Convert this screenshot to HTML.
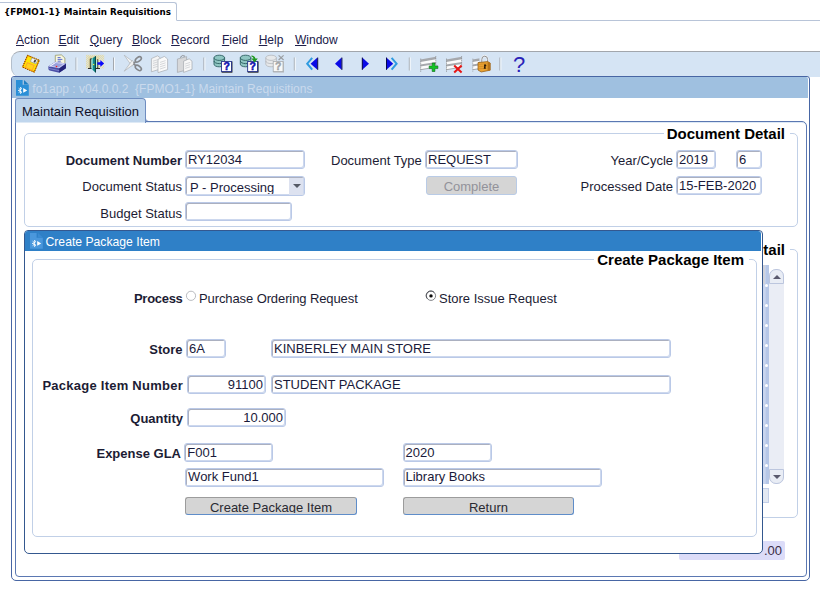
<!DOCTYPE html>
<html><head><meta charset="utf-8"><title>Maintain Requisitions</title>
<style>
html,body{margin:0;padding:0;background:#fff;}
body{width:820px;height:590px;position:relative;overflow:hidden;font-family:"Liberation Sans",Arial,sans-serif;font-size:13px;color:#000;}
.a{position:absolute;box-sizing:border-box;}
.t{position:absolute;white-space:nowrap;line-height:1;box-sizing:border-box;}
.b{font-weight:bold;}
.r{text-align:right;}
.f{position:absolute;box-sizing:border-box;margin-top:-0.5px;background:#fff;border:1px solid #bac9e7;border-radius:3px;box-shadow:inset 1px 1px 0 #abb0c0,inset -1px -1px 0 #cdd8ee;font-size:13px;line-height:17px;padding:0 2px;white-space:nowrap;overflow:hidden;height:19px;}
.btn{position:absolute;box-sizing:border-box;background:#d5d5d5;border:1px solid #9c9c9c;border-right-color:#5f8dc9;border-bottom-color:#5f8dc9;border-radius:3px;font-size:13px;text-align:center;white-space:nowrap;overflow:hidden;height:18px;line-height:20px;color:#2a2a32;}
.frame{position:absolute;box-sizing:border-box;border:1px solid #c1d0e7;border-radius:5px;}
.lb{font-size:13px;color:#1c1c34;}
.ft{font-size:15px;color:#000;}
.f{color:#1a1a3a;}
.bt{height:14.5px;overflow:hidden;line-height:19.6px;}
u{text-decoration:underline;}
</style></head><body>

<!-- top browser tab -->
<div class="a" style="left:0;top:20px;width:820px;height:1px;background:#b8c4d8;"></div>
<div class="a" style="left:-1px;top:2px;width:178px;height:19px;border:1px solid #b8c4d8;border-bottom:1px solid #fff;border-radius:0 3px 0 0;background:#fff;"></div>
<div class="t b" style="left:4px;top:7.8px;font-family:'DejaVu Sans',Verdana,sans-serif;font-size:8.75px;">{FPMO1-1} Maintain Requisitions</div>

<!-- menu -->
<div id="menu" style="font-size:12px;color:#20204a;"><span class="t" style="left:16px;top:33.6px;"><u>A</u>ction</span><span class="t" style="left:58.5px;top:33.6px;"><u>E</u>dit</span><span class="t" style="left:89.8px;top:33.6px;"><u>Q</u>uery</span><span class="t" style="left:131.9px;top:33.6px;"><u>B</u>lock</span><span class="t" style="left:171.1px;top:33.6px;"><u>R</u>ecord</span><span class="t" style="left:221.9px;top:33.6px;"><u>F</u>ield</span><span class="t" style="left:258.7px;top:33.6px;"><u>H</u>elp</span><span class="t" style="left:295px;top:33.6px;"><u>W</u>indow</span></div>

<!-- toolbar -->
<div class="a" style="left:11px;top:50.6px;width:820px;height:26.4px;background:#d5e4f4;border:1px solid #b4bfcc;border-top-color:#a2a6ac;border-bottom:none;border-radius:9px 0 0 9px;"></div>

<!-- toolbar icons -->
<svg class="a" style="left:0;top:50px;" width="540" height="28" viewBox="0 50 540 28">
<defs>
 <pattern id="stip" x="86" y="54.8" width="2" height="2" patternUnits="userSpaceOnUse"><rect width="2" height="2" fill="#d9e4ec"/><rect width="1" height="1" fill="#e6d99a"/><rect x="1" y="1" width="1" height="1" fill="#e6d99a"/></pattern>
 <g id="sep"><rect x="0" y="57.5" width="1" height="13" fill="#a4a8ae"/><rect x="1" y="57.5" width="1" height="13" fill="#f4f8fc"/></g>
 <g id="cyl"><path d="M0 2.6 V9 A5.3 2.6 0 0 0 10.6 9 V2.6 Z"/><ellipse cx="5.3" cy="2.6" rx="5.3" ry="2.6"/><path d="M0 5.8 A5.3 2.6 0 0 0 10.6 5.8" fill="none"/></g>
 <g id="qbox"><rect x="0.5" y="0.5" width="10" height="10.6"/></g>
 <g id="rows"><path d="M0 3.5 L15.6 .8 V11.5 L0 14.2 Z" fill="#a6a8ac"/><path d="M0 6 L15.6 3.3 V5.9 L0 8.6 Z" fill="#fbfbfb"/><path d="M0 10.6 L15.6 7.9 V10.5 L0 13.2 Z" fill="#fbfbfb"/><path d="M.3 2.5 V16.2 M15.4 0 V11.5" stroke="#8a8c90" stroke-width=".7" stroke-dasharray="1.4 .6" fill="none"/></g>
</defs>
<!-- save -->
<g transform="translate(30.9 63.7) rotate(23) scale(.93)"><rect x="-6.7" y="-6.7" width="13.4" height="13.4" fill="#ffe600" stroke="#ff9c00" stroke-width="1.3"/><rect x="-6.9" y="-6.9" width="13.8" height="13.8" fill="none" stroke="#2e2000" stroke-width=".9" stroke-dasharray="1 1.5"/><rect x="-1.4" y="-6.3" width="6.6" height="4.4" fill="#f2f2f2" stroke="#8a8a8a" stroke-width=".6"/><rect x="1.9" y="-5.5" width="1.9" height="2.8" fill="#3c3c3c"/><rect x="-4" y=".4" width="8" height="5.6" fill="#ffd21e" stroke="#ffa62a" stroke-width="1"/></g>
<!-- printer -->
<g><path d="M55.3 62.8 L55.3 55.3 L61.4 54.9 L64.9 58 L64.9 64.2 Z" fill="#f7f7df" stroke="#8c8c58" stroke-width=".7"/><path d="M57.6 57.6h3M57.6 59.4h4.8M57.6 61.2h3.2" stroke="#4a5ad0" stroke-width=".9"/><path d="M48.4 66.2 L55.4 61.7 L65.9 63.5 L65.9 68.2 L59.2 72.7 L49.6 70.5 Q48.3 70 48.4 68.6 Z" fill="#4a4ea6"/><path d="M59.2 68.3 L65.9 63.5 V68.2 L59.2 72.7 Z" fill="#24247a"/><path d="M48.4 66.2 L55.4 61.7 L65.9 63.5 L59.2 68.3 Z" fill="#c8ccf2"/><path d="M51.4 65.8 L55.8 63 L63 64.3 L58.8 67.2 Z" fill="#9aa0dc"/><path d="M49.6 66.4 L55.4 62.6" stroke="#fff" stroke-width=".8"/><path d="M48.6 68.4 L59.2 70.6" stroke="#7c82cc" stroke-width="1"/><rect x="55.8" y="65.9" width="1.4" height="1.3" fill="#ff1a1a"/></g>
<use href="#sep" x="75.5"/>
<!-- exit -->
<g><rect x="86" y="54.8" width="18.2" height="13.6" fill="url(#stip)"/><rect x="88.4" y="56.4" width="10.6" height="12" fill="#e2d9a8"/><path d="M90.3 68.5 V58.9 H92 M97.7 59.3 V68.5 M88 68.5 H100" fill="none" stroke="#1a1a1a" stroke-width=".9"/><path d="M100 59.4 L104.6 63.5 L100 67.6 Z" fill="#fff"/><path d="M91.6 58.7 L95.8 55.9 V72.8 L91.6 69.1 Z" fill="#128a8a"/><path d="M91.6 58.7 L92.8 57.9 V70.1 L91.6 69.1 Z" fill="#8adcdc"/><path d="M94.9 56.5 L95.9 55.9 V72.8 L94.9 72 Z" fill="#063c3c"/><rect x="96.1" y="60" width="1.1" height="7.2" fill="#a8f2f2"/><rect x="93" y="63.9" width="1.2" height="1.2" fill="#ffe83a"/><path d="M97.4 62.3 H100.3 V59.9 L104.2 63.5 L100.3 67 V64.8 H97.4 Z" fill="#0808fa"/></g>
<use href="#sep" x="113"/>
<!-- scissors -->
<g><path d="M124.2 55.2 L135 63.2 L132 66.2 Z" fill="#f8f8f8" stroke="#aeb1b6" stroke-width=".7"/><path d="M124.2 71.2 L135 63.4 L132.2 60.4 Z" fill="#f0f0f0" stroke="#aeb1b6" stroke-width=".7"/><ellipse cx="138.3" cy="59.4" rx="3.5" ry="2" transform="rotate(-38 138.3 59.4)" fill="none" stroke="#85878b" stroke-width="1.6"/><ellipse cx="138.3" cy="67.9" rx="3.5" ry="2" transform="rotate(38 138.3 67.9)" fill="none" stroke="#85878b" stroke-width="1.6"/><path d="M133.4 63.4 L135.8 61.6 M133.4 63.6 L135.8 65.6" stroke="#85878b" stroke-width="1.6"/></g>
<!-- copy -->
<g stroke="#a8acb2" stroke-width=".7"><path d="M151.4 58.6 L157.6 55.8 L160.4 58 V69 L151.4 71.8 Z" fill="#f4f4f4"/><path d="M158 59.4 L164.4 56.4 L167.6 59 V69.6 L158 72.6 Z" fill="#fafafa"/><path d="M153 61.2l5-1.6M153 63.4l5-1.6M153 65.6l5-1.6M153 67.8l5-1.6M160 62.4l5.6-1.8M160 64.6l5.6-1.8M160 66.8l5.6-1.8M160 69l5.6-1.8" stroke="#c4c7cc" fill="none"/></g>
<!-- paste -->
<g stroke="#a2a6ac" stroke-width=".7"><path d="M177.4 59 L186.6 56.6 V70 L177.4 72.4 Z" fill="#d7d8da"/><path d="M180 57.6 q2.2-3.4 5-1.4" fill="none" stroke="#8e9094" stroke-width="1"/><path d="M183.6 61.2 L189.2 58.8 L192 61.2 V69.4 L183.6 72.4 Z" fill="#f8f8f8"/><path d="M185.2 64l5-1.6M185.2 66.2l5-1.6M185.2 68.4l5-1.6" stroke="#c4c7cc" fill="none"/></g>
<use href="#sep" x="203.4"/>
<!-- enter query -->
<g><use href="#cyl" x="214" y="55.2" fill="#8fc6c2" stroke="#2a5e60" stroke-width=".9"/><rect x="221.6" y="61.4" width="10.8" height="11.2" fill="#0a0a0a"/><rect x="221.6" y="61.4" width="9.8" height="10.2" fill="#fff" stroke="#1c2a8c" stroke-width=".8"/><text x="226.6" y="70.4" font-family="Liberation Sans,Arial,sans-serif" font-weight="bold" font-size="10.5" fill="#1010b0" stroke="#1010b0" stroke-width=".5" text-anchor="middle">?</text></g>
<!-- execute query -->
<g><use href="#cyl" x="240.3" y="55.2" fill="#8fc6c2" stroke="#2a5e60" stroke-width=".9"/><rect x="247.7" y="61.4" width="10.8" height="11.2" fill="#0a0a0a"/><rect x="247.7" y="61.4" width="9.8" height="10.2" fill="#fff" stroke="#1c2a8c" stroke-width=".8"/><text x="252.7" y="70.4" font-family="Liberation Sans,Arial,sans-serif" font-weight="bold" font-size="10.5" fill="#1010b0" stroke="#1010b0" stroke-width=".5" text-anchor="middle">?</text><path d="M251.4 55.4 q3.6 .2 4 3.2 h2.4 l-3.2 3.8 l-3.2 -3.8 h2.2 q-.2-1.8-2.2-2.2 Z" fill="#1f9a1f"/></g>
<!-- cancel query -->
<g><use href="#cyl" x="265.8" y="55.2" fill="#e6e8ea" stroke="#b4b8bc" stroke-width=".8"/><rect x="273.2" y="61.4" width="10.8" height="11.2" fill="#b9bcc0"/><rect x="273.2" y="61.4" width="9.8" height="10.2" fill="#f8f8f8" stroke="#a8acb0" stroke-width=".8"/><text x="278.2" y="70.4" font-family="Liberation Sans,Arial,sans-serif" font-weight="bold" font-size="10.5" fill="#a0a4a8" stroke="#a0a4a8" stroke-width=".4" text-anchor="middle">?</text><path d="M278.6 55.4 l5 4.6 M283.6 55.4 l-5 4.6" stroke="#9a9ea2" stroke-width="1.2"/></g>
<use href="#sep" x="293.8"/>
<!-- nav -->
<g><path d="M312.2 57.8 L307.2 63.7 L312.2 69.6" fill="none" stroke="#2f9be0" stroke-width="2"/><path d="M317.4 57.6 V69.8 L310.6 63.7 Z" fill="#0a0ae6"/><rect x="317.2" y="57.6" width="1" height="12.2" fill="#08084a"/>
<path d="M341.6 57.6 V69.8 L335 63.7 Z" fill="#0a0ae6"/><rect x="341.4" y="57.6" width="1" height="12.2" fill="#08084a"/>
<path d="M362.2 57.6 V69.8 L369 63.7 Z" fill="#0a0ae6"/><rect x="361.8" y="57.6" width="1" height="12.2" fill="#08084a"/>
<path d="M391.6 57.8 L396.6 63.7 L391.6 69.6" fill="none" stroke="#2f9be0" stroke-width="2"/><path d="M386.4 57.6 V69.8 L393.2 63.7 Z" fill="#0a0ae6"/><rect x="386" y="57.6" width="1" height="12.2" fill="#08084a"/></g>
<use href="#sep" x="408.8"/>
<!-- insert -->
<g><use href="#rows" x="420.4" y="56"/><path d="M432.2 63 h2.7 v2.9 h3 v2.7 h-3 v2.9 h-2.7 v-2.9 h-3 v-2.7 h3 Z" fill="#12c424" stroke="#0a6414" stroke-width=".6"/></g>
<!-- delete -->
<g><use href="#rows" x="446.2" y="56"/><path d="M454.2 65.4 l7.4 7 M461.6 65.4 l-7.4 7" stroke="#e81414" stroke-width="2"/></g>
<!-- lock -->
<g><svg x="472.4" y="56" width="7" height="17" viewBox="0 0 7 17"><use href="#rows"/></svg><path d="M481.8 62.5 v-3 a2.9 3.3 0 0 1 5.8 0 v3" fill="none" stroke="#f0f0f0" stroke-width="2.2"/><path d="M481.8 62.5 v-3 a2.9 3.3 0 0 1 5.8 0 v3" fill="none" stroke="#8e9094" stroke-width="1"/><path d="M478 62.6 L487.6 61.6 L490.2 63 V70.2 L481.2 72 L478 70 Z" fill="#eaa232" stroke="#8a5410" stroke-width=".7"/><path d="M487.6 61.6 L490.2 63 V70.2 L487.6 71 Z" fill="#b87418"/><path d="M478 64.5 L487.6 63.6 M478 66.8 L487.6 66 M478 68.8 L487.6 68.2" stroke="#c88420" stroke-width=".6"/><path d="M484 65 a1.2 1.2 0 1 1 1.4 1.6 l.5 2.2 h-2.2 l.5 -2.2 Z" fill="#2a1a06"/></g>
<use href="#sep" x="499.4"/>
<text x="519" y="71.8" font-family="Liberation Sans,Arial,sans-serif" font-size="22" fill="#2a22b8" text-anchor="middle">?</text>
</svg>

<!-- window -->
<div class="a" id="win" style="left:11.3px;top:76.4px;width:798.6px;height:504.4px;border:1px solid #4866a4;border-top-width:1.6px;border-radius:3px 3px 5px 5px;background:#fff;"></div>
<div class="a" style="left:12.3px;top:77.2px;width:795.7px;height:20.6px;background:#9fc0e0;border-radius:2px 2px 0 0;"></div>
<svg class="a" style="left:16px;top:80px;" width="13" height="16" viewBox="0 0 13 16"><path d="M0 0 H6.6 V4.8 H12.8 V15.8 H0 Z" fill="#2b8fd7"/><path d="M8 0 L12.8 4.4 H8 Z" fill="#1f7fc4"/><path d="M5.8 7.9 A2.5 2.5 0 0 0 5.8 12.9 L5.8 11.5 A1.1 1.1 0 0 1 5.8 9.3 Z" fill="#fff"/><path d="M4.9 8 l-.4 -1 M3.6 8.8 l-.9 -.6 M3.2 10.4 h-1.1 M3.6 12 l-.9 .6 M4.9 12.8 l-.4 1" stroke="#fff" stroke-width="1" fill="none"/><path d="M7.2 8 L11.2 10.4 L7.2 12.8 Z" fill="#fff"/></svg>
<div class="t" id="wtitle" style="left:32.3px;top:83px;font-size:12px;color:#cadaed;">fo1app : v04.0.0.2 &nbsp;{FPMO1-1} Maintain Requisitions</div>

<!-- tab -->
<div class="a" style="left:14.5px;top:121.3px;width:792px;height:456.2px;border:1px solid #5b78b2;box-shadow:inset 0 1px 0 #dde9f6;border-radius:0 5px 4px 4px;"></div>
<div class="a" style="left:14.5px;top:98px;width:131.5px;height:25px;background:linear-gradient(#bdd4ec 0,#c0d6ed 22.5px,#fff 24.6px);border:1px solid #6f8dc0;border-bottom:none;border-radius:3px 4px 0 0;"></div>
<div class="a" style="left:145px;top:118.3px;width:4px;height:4px;border-bottom:1px solid #5b78b2;border-left:1px solid #6f8dc0;border-radius:0 0 0 4px;"></div>
<div class="t" id="tabtxt" style="left:22px;top:105px;font-size:13px;color:#101028;">Maintain Requisition</div>

<!-- Document Detail frame -->
<div class="frame" style="left:24px;top:133px;width:774px;height:93.6px;"></div>
<div class="t b ft" style="left:664px;top:126px;width:126px;padding:0 5px 0 0;background:#fff;text-align:right;">Document Detail</div>

<div class="t b lb r" style="left:30px;width:152px;top:154px;">Document Number</div>
<div class="f" style="left:185px;top:150px;width:120px;">RY12034</div>
<div class="t lb r" style="left:30px;width:152px;top:180px;">Document Status</div>
<div class="f" style="left:185px;top:176px;width:120px;height:20px;padding-left:4px;line-height:19px;"><div style="height:17.6px;overflow:hidden;line-height:21.4px;">P - Processing</div><span class="a" style="right:1.5px;top:1px;width:13.5px;height:17px;background:#dde2f0;"></span><span class="a" style="right:3px;top:7px;width:0;height:0;border:4px solid transparent;border-top:4px solid #555a66;border-bottom:none;"></span></div>
<div class="t lb r" style="left:30px;width:152px;top:207px;">Budget Status</div>
<div class="f" style="left:185px;top:202px;width:107px;"></div>

<div class="t lb" style="left:331px;top:154px;">Document Type</div>
<div class="f" style="left:425px;top:150px;width:93px;">REQUEST</div>
<div class="btn" style="left:426px;top:176.2px;width:91px;height:18.5px;color:#92929a;border-color:#b9cbe6;line-height:19.4px;">Complete</div>

<div class="t lb r" style="left:560px;width:113px;top:154px;">Year/Cycle</div>
<div class="f" style="left:676px;top:150px;width:40px;">2019</div>
<div class="f" style="left:736px;top:150px;width:26px;">6</div>
<div class="t lb r" style="left:560px;width:113px;top:180px;">Processed Date</div>
<div class="f" style="left:676px;top:176px;width:86px;">15-FEB-2020</div>

<!-- background block (partly hidden behind dialog) -->
<div class="frame" style="left:24px;top:249px;width:774px;height:269px;"></div>
<div class="t b ft" style="left:664px;top:242px;width:126px;padding:0 5px 0 0;background:#fff;text-align:right;">Document Detail</div>
<div class="a" style="left:600px;top:265px;width:168.6px;height:219px;background:linear-gradient(90deg,#c9d5ee 165px,#b6c7e7 166.5px);"></div>
<div class="a" style="left:600px;top:265px;width:165.3px;height:18.5px;background:#d0d2da;"></div>
<div class="a" style="left:764.5px;top:283.6px;width:3px;height:3px;border-radius:50%;background:#fff;"></div><div class="a" style="left:764.5px;top:303.6px;width:3px;height:3px;border-radius:50%;background:#fff;"></div><div class="a" style="left:764.5px;top:323.6px;width:3px;height:3px;border-radius:50%;background:#fff;"></div><div class="a" style="left:764.5px;top:343.6px;width:3px;height:3px;border-radius:50%;background:#fff;"></div><div class="a" style="left:764.5px;top:363.6px;width:3px;height:3px;border-radius:50%;background:#fff;"></div><div class="a" style="left:764.5px;top:383.6px;width:3px;height:3px;border-radius:50%;background:#fff;"></div><div class="a" style="left:764.5px;top:403.6px;width:3px;height:3px;border-radius:50%;background:#fff;"></div><div class="a" style="left:764.5px;top:423.6px;width:3px;height:3px;border-radius:50%;background:#fff;"></div><div class="a" style="left:764.5px;top:443.6px;width:3px;height:3px;border-radius:50%;background:#fff;"></div><div class="a" style="left:764.5px;top:463.6px;width:3px;height:3px;border-radius:50%;background:#fff;"></div>
<div class="a" style="left:769px;top:269px;width:15px;height:215px;background:#eaedf5;border-radius:7px;"></div>
<div class="a" style="left:769px;top:269px;width:15px;height:15px;background:#e9edf5;border:1px solid #bcc6de;border-radius:7px 7px 0 0;"></div>
<div class="a" style="left:769px;top:469px;width:15px;height:15px;background:#e9edf5;border:1px solid #bcc6de;border-radius:0 0 7px 7px;"></div>
<div class="a" style="left:773px;top:275px;width:0;height:0;border:4px solid transparent;border-bottom:4px solid #5a5a6e;border-top:none;"></div>
<div class="a" style="left:773px;top:475px;width:0;height:0;border:4px solid transparent;border-top:4px solid #5a5a6e;border-bottom:none;"></div>
<div class="a" style="left:700px;top:487.5px;width:69px;height:15px;background:#e2e8f2;border:1px solid #c3cfe8;"></div>
<div class="a" style="left:679px;top:541px;width:106px;height:19px;background:#dcdcf8;border-radius:2px;"></div>
<div class="t lb" style="left:764px;top:544px;color:#3a2c44;">.00</div>

<!-- dialog -->
<div class="a" id="dlg" style="left:24px;top:230px;width:739px;height:324.4px;background:#fff;border:1px solid #34588f;border-radius:4px 4px 5px 5px;"></div>
<div class="a" style="left:25px;top:231px;width:736px;height:20px;background:#2f80c7;border-radius:3px 3px 0 0;"></div>
<svg class="a" style="left:29.5px;top:233px;" width="13" height="16" viewBox="0 0 13 16"><path d="M0 0 H6.6 V4.8 H12.8 V15.8 H0 Z" fill="#4a97dc"/><path d="M8 0 L12.8 4.4 H8 Z" fill="#3a8ad2"/><path d="M5.8 7.9 A2.5 2.5 0 0 0 5.8 12.9 L5.8 11.5 A1.1 1.1 0 0 1 5.8 9.3 Z" fill="#fff"/><path d="M4.9 8 l-.4 -1 M3.6 8.8 l-.9 -.6 M3.2 10.4 h-1.1 M3.6 12 l-.9 .6 M4.9 12.8 l-.4 1" stroke="#fff" stroke-width="1" fill="none"/><path d="M7.2 8 L11.2 10.4 L7.2 12.8 Z" fill="#fff"/></svg>
<div class="t" id="dtitle" style="left:45.5px;top:236px;font-size:12.2px;color:#fff;">Create Package Item</div>

<div class="frame" style="left:32px;top:259px;width:725px;height:278px;"></div>
<div class="t b ft" style="left:594px;top:252px;width:154.5px;padding:0 4.5px 0 0;background:#fff;text-align:right;">Create Package Item</div>

<div class="t b lb r" style="left:40px;width:142.5px;top:292px;letter-spacing:-0.3px;">Process</div>
<svg class="a" style="left:184px;top:288px;" width="256" height="16" viewBox="184 288 256 16"><circle cx="191" cy="295.8" r="4.6" fill="#fff" stroke="#b2b4ba" stroke-width=".9"/><circle cx="431" cy="295.8" r="4.6" fill="#fff" stroke="#74767c" stroke-width=".9"/><path d="M427.2 298.6 A4.6 4.6 0 0 1 434.4 292.6" fill="none" stroke="#4a4c52" stroke-width=".9"/><circle cx="431" cy="295.9" r="1.7" fill="#0c0c0c"/></svg>
<div class="t lb" style="left:199px;top:292px;letter-spacing:-0.1px;">Purchase Ordering Request</div>
<div class="t lb" style="left:439px;top:292px;">Store Issue Request</div>

<div class="t b lb r" style="left:40px;width:142.5px;top:343px;">Store</div>
<div class="f" style="left:186px;top:339px;width:40px;">6A</div>
<div class="f" style="left:271px;top:339px;width:400px;">KINBERLEY MAIN STORE</div>

<div class="t b lb r" style="left:40px;width:143px;top:379px;letter-spacing:0.25px;">Package Item Number</div>
<div class="f r" style="left:187px;top:375px;width:79px;">91100</div>
<div class="f" style="left:271px;top:375px;width:400px;">STUDENT PACKAGE</div>

<div class="t b lb r" style="left:40px;width:143px;top:412px;">Quantity</div>
<div class="f r" style="left:187px;top:408px;width:99px;">10.000</div>

<div class="t b lb r" style="left:40px;width:141px;top:447px;">Expense GLA</div>
<div class="f" style="left:183.5px;top:443px;width:89.5px;padding-left:2.8px;">F001</div>
<div class="f" style="left:402.5px;top:443px;width:89px;">2020</div>
<div class="f" style="left:184.5px;top:468px;width:199.5px;line-height:15px;padding-left:2.6px;">Work Fund1</div>
<div class="f" style="left:402.5px;top:468px;width:199px;line-height:15px;">Library Books</div>

<div class="btn" style="left:185px;top:497px;width:172px;"><div class="bt">Create Package Item</div></div>
<div class="btn" style="left:403px;top:497px;width:171px;"><div class="bt">Return</div></div>

</body></html>
